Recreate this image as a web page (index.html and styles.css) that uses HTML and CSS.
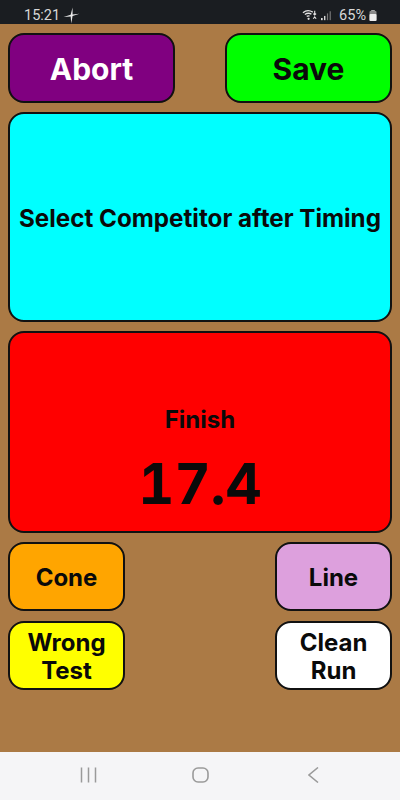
FILE: index.html
```html
<!DOCTYPE html>
<html lang="en">
<head>
    <meta charset="UTF-8">
    <title>Timing</title>
    <meta name="viewport" content="width=device-width, initial-scale=1.0">
    <link rel="stylesheet" href="styles.css">
</head>
<body>

<div class="status-bar">
    <div class="status-left">
        <span>15:21</span>
        <svg width="17" height="17" viewBox="0 0 16 16"><path d="M9 0.5 L9 7 L15.5 6.4 L9 8.4 L7.8 15.5 L7.2 9 L0.5 9.4 L7.2 7.4 Z" fill="#ececec"/></svg>
    </div>
    <div class="status-right">
        <svg width="16" height="12" viewBox="0 0 17 12" fill="none" stroke="#e4e4e4" stroke-width="1.4"><path d="M1 3.5 Q6 -0.5 11.5 3"/><path d="M3 5.5 Q6.5 3 10 5"/><path d="M5 7.5 Q6.5 6.5 8 7.2"/><circle cx="7" cy="10" r="1.2" fill="#e4e4e4" stroke="none"/><path d="M13.5 1.5 V6 M12 4.5 L13.5 6 L15 4.5 M12 10 L13.5 8 L15 10" stroke-width="1.2"/></svg>
        <svg class="signal" width="11" height="11" viewBox="0 0 13 11"><rect x="0" y="8.5" width="2" height="2.5" fill="#e0e0e0"/><rect x="3.6" y="6" width="1.6" height="5" fill="#e0e0e0"/><rect x="7" y="3" width="1.4" height="8" fill="#777"/><rect x="10.2" y="0.5" width="1.4" height="10.5" fill="#777"/></svg>
        <span>65%</span>
        <svg width="8" height="11" viewBox="0 0 8 11"><rect x="2.2" y="0" width="3.6" height="1.5" fill="#aaa"/><rect x="0.5" y="1" width="7" height="10" rx="1" fill="#8a8a8a"/><rect x="0.5" y="4" width="7" height="7" rx="1" fill="#eee"/></svg>
    </div>
</div>

<main class="screen">
    <div class="top-row">
        <button class="btn big abort">Abort</button>
        <button class="btn big save">Save</button>
    </div>
    <div class="panel competitor">Select Competitor after Timing</div>
    <div class="panel timer">
        <div class="timer-label">Finish</div>
        <div class="timer-value">17.4</div>
    </div>
    <div class="small-row">
        <button class="btn small cone">Cone</button>
        <button class="btn small line">Line</button>
    </div>
    <div class="small-row">
        <button class="btn small wrong">Wrong Test</button>
        <button class="btn small clean">Clean Run</button>
    </div>
</main>

<div class="nav-bar">
    <svg class="nav-recent" width="17" height="16" viewBox="0 0 17 16" stroke="#9a9a9a" stroke-width="1.5"><path d="M1.5 0.5 V15.5 M8.5 0.5 V15.5 M15.5 0.5 V15.5"/></svg>
    <svg class="nav-home" width="17" height="16" viewBox="0 0 17 16" fill="none" stroke="#9a9a9a" stroke-width="1.6"><rect x="1" y="1" width="15" height="14" rx="5"/></svg>
    <svg width="11" height="16" viewBox="0 0 11 16" fill="none" stroke="#9a9a9a" stroke-width="1.5"><path d="M10 0.5 L1 8 L10 15.5"/></svg>
</div>

</body>
</html>
```

FILE: styles.css
```css
html, body {
    margin: 0;
    height: 100%;
}
body {
    width: 400px;
    height: 800px;
    display: flex;
    flex-direction: column;
    overflow: hidden;
    font-family: Inter, Roboto, sans-serif;
    background-color: #ab7a45;
}
.status-bar {
    height: 24px;
    flex: none;
    background-color: #1a1d21;
    color: #d8d8d8;
    font-family: Roboto, sans-serif;
    font-size: 14.5px;
    display: flex;
    justify-content: space-between;
    align-items: center;
    padding: 6px 23px 0 24px;
    box-sizing: border-box;
}
.status-left, .status-right {
    display: flex;
    align-items: center;
}
.status-left {
    gap: 3px;
}
.status-right {
    gap: 3px;
}
.signal {
    margin-right: 4px;
}
.screen {
    flex: 1;
    display: flex;
    flex-direction: column;
    padding: 9px 8px 0 8px;
    box-sizing: border-box;
}
.btn, .panel {
    border: 2px solid #111;
    border-radius: 16px;
    box-sizing: border-box;
    font-family: inherit;
    font-weight: bold;
    color: #0a0a0a;
    padding: 0;
}
.top-row, .small-row {
    display: flex;
    justify-content: space-between;
}
.top-row {
    margin-bottom: 9px;
}
.small-row {
    margin-bottom: 10px;
}
.big {
    height: 70px;
    width: 167px;
    font-size: 30px;
    padding-top: 2px;
}
.small {
    height: 69px;
    width: 117px;
    font-size: 24px;
    line-height: 28px;
    padding: 2px 12px 0;
}
.abort {
    background-color: #800080;
    color: #fff;
}
.save {
    background-color: #00ff00;
}
.cone {
    background-color: #ffa500;
}
.line {
    background-color: #dda0dd;
}
.wrong {
    background-color: #ffff00;
}
.clean {
    background-color: #fff;
}
.panel {
    width: 384px;
    display: flex;
    flex-direction: column;
    align-items: center;
    justify-content: center;
}
.competitor {
    height: 210px;
    margin-bottom: 9px;
    padding-top: 3px;
    background-color: #00ffff;
    font-size: 24.2px;
}
.timer {
    height: 202px;
    margin-bottom: 9px;
    padding-top: 57px;
    background-color: #ff0000;
}
.timer-label {
    font-size: 24px;
    margin-bottom: 17px;
}
.timer-value {
    font-size: 56px;
    line-height: 66px;
    font-variant-numeric: tabular-nums;
}
.nav-bar {
    height: 48px;
    flex: none;
    background-color: #f5f5f7;
    display: flex;
    align-items: center;
    box-sizing: border-box;
    padding: 0 0 2px 80px;
}
.nav-recent {
    margin-right: 95px;
}
.nav-home {
    margin-right: 99px;
}
```
